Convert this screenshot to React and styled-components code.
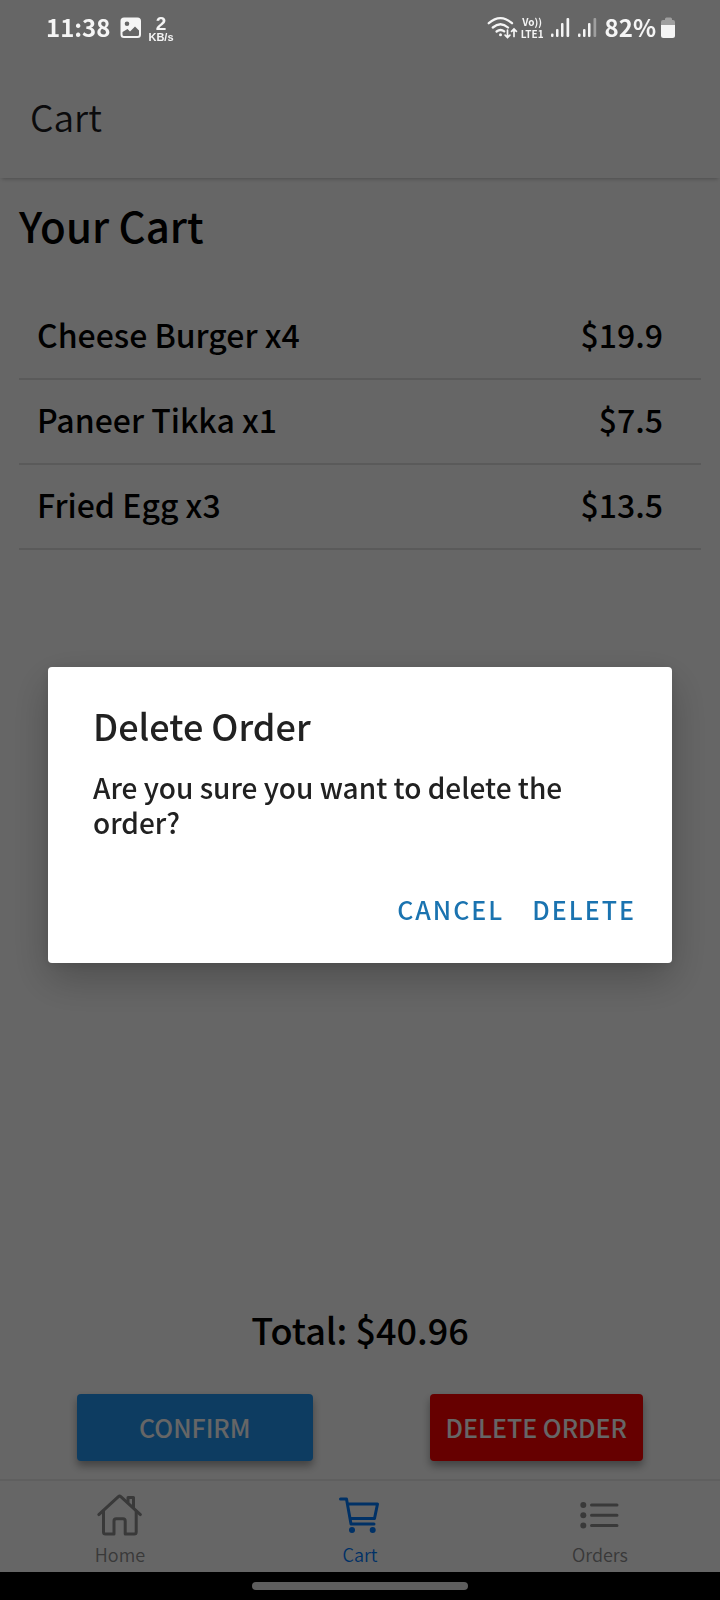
import React from 'react';
import styled, { createGlobalStyle } from 'styled-components';

const GlobalStyle = createGlobalStyle`
  *, *::before, *::after { box-sizing: border-box; }
  body {
    margin: 0;
    background: #fff;
    color: #000;
    font-family: "Noto Sans CJK SC", "Noto Sans", sans-serif;
  }
  h1, h2, p, ul { margin: 0; padding: 0; font-weight: 500; }
  button { font: inherit; border: 0; cursor: pointer; }
`;

const Screen = styled.div`
  min-height: 100vh;
  display: flex;
  flex-direction: column;
`;

/* Status bar: stays bright above the dimmed page */
const StatusBar = styled.div`
  position: relative;
  z-index: 3;
  height: 56px;
  padding: 0 44px 0 46px;
  display: flex;
  align-items: center;
  justify-content: space-between;
  color: #f5f5f5;
`;

const StatusGroup = styled.div`
  display: flex;
  align-items: center;
  gap: ${(p) => p.$gap}px;
`;

const StatusText = styled.span`
  padding-bottom: 2px;
  font-size: 24px;
  line-height: 32px;
  font-weight: 700;
`;

const StatusStack = styled.span`
  display: flex;
  flex-direction: column;
  align-items: center;
  font-family: "Liberation Sans", sans-serif;
  font-weight: 700;
  font-size: ${(p) => p.$size}px;
  line-height: ${(p) => p.$line}px;
`;

const StatusSmall = styled.span`
  font-size: 11px;
  line-height: 10px;
`;

const Header = styled.header`
  height: 122px;
  padding: 0 30px 2px;
  display: flex;
  align-items: center;
  box-shadow: 0 3px 4px -2px rgba(0, 0, 0, 0.25);
`;

const HeaderTitle = styled.h1`
  font-size: 37px;
  line-height: 40px;
  font-weight: 350;
  color: #1c1c1e;
`;

const Main = styled.main`
  flex: 1;
  display: flex;
  flex-direction: column;
  padding: 23px 19px 18px;
`;

const Heading = styled.h2`
  font-size: 42px;
  line-height: 48px;
  margin-bottom: 46px;
`;

const CartList = styled.ul`
  flex: 1;
  list-style: none;
`;

const CartRow = styled.li`
  height: 85px;
  padding: 0 38px 6px 18px;
  display: flex;
  align-items: center;
  justify-content: space-between;
  border-bottom: 2px solid #e0e0e0;
  font-size: 32px;
  line-height: 40px;
  font-weight: 500;
`;

const Total = styled.p`
  text-align: center;
  font-size: 36px;
  line-height: 48px;
  margin-bottom: 41px;
`;

const Actions = styled.div`
  display: flex;
  justify-content: space-between;
  padding: 0 58px;
`;

const ActionButton = styled.button`
  height: 67px;
  padding: 0 ${(p) => p.$pad}px 2px;
  border-radius: 4px;
  background: ${(p) => p.$color};
  color: #fff;
  font-size: 25px;
  line-height: 32px;
  font-weight: 500;
  box-shadow: 0 5px 8px rgba(0, 0, 0, 0.36);
`;

const TabBar = styled.nav`
  height: 93px;
  display: grid;
  grid-template-columns: repeat(3, 1fr);
  border-top: 2px solid #eeeeee;
`;

const Tab = styled.a`
  display: flex;
  flex-direction: column;
  align-items: center;
  gap: 4px;
  padding-top: 11px;
  color: ${(p) => (p.$active ? '#007aff' : '#8e8e8f')};
  font-size: 18px;
  line-height: 28px;
  font-weight: 350;
  text-decoration: none;

  svg { display: block; }
`;

const GestureBar = styled.div`
  position: relative;
  z-index: 3;
  height: 28px;
  padding-top: 10px;
  background: #000;
`;

const GesturePill = styled.div`
  width: 30%;
  height: 8px;
  margin: 0 auto;
  border-radius: 4px;
  background: #5e5e5e;
`;

const Backdrop = styled.div`
  position: fixed;
  inset: 0;
  z-index: 2;
  display: flex;
  align-items: center;
  padding: 58px 48px 28px;
  background: rgba(0, 0, 0, 0.6);
`;

const Dialog = styled.div`
  width: 100%;
  padding: 34px 24px 26px 45px;
  border-radius: 4px;
  background: #fff;
  color: #212121;
  box-shadow: 0 16px 40px rgba(0, 0, 0, 0.24), 0 2px 12px rgba(0, 0, 0, 0.1);
`;

const DialogTitle = styled.h2`
  font-size: 36px;
  line-height: 48px;
`;

const DialogText = styled.p`
  margin-top: 21px;
  padding-right: 22px;
  font-size: 28px;
  line-height: 35px;
`;

const DialogActions = styled.div`
  display: flex;
  justify-content: flex-end;
  margin-top: 41px;
`;

const DialogButton = styled.button`
  height: 56px;
  padding: 0 12px 0 16px;
  background: none;
  color: #1a73b0;
  font-size: 25px;
  line-height: 32px;
  font-weight: 500;
  letter-spacing: 2px;
`;

const ImageIcon = () => (
  <svg width="22" height="22" viewBox="0 0 22 22" aria-hidden="true">
    <path fillRule="evenodd" fill="currentColor" d="M4 .5h13.500a3.500 3.500 0 0 1 3.500 3.500v13.500a3.500 3.500 0 0 1-3.500 3.500H4A3.500 3.500 0 0 1 .5 17.500V4A3.500 3.500 0 0 1 4 .5zM7 4.500a2.300 2.300 0 1 0 0 4.600 2.300 2.300 0 0 0 0-4.600zM2.500 15v2.500q0 1.500 1.500 1.500h13.500q1.500 0 1.500-1.500v-4l-4-4-5 5-2.500-2.500z" />
  </svg>
);

const WifiIcon = () => (
  <svg width="32" height="24" viewBox="0 0 32 24" fill="none" stroke="currentColor" strokeWidth="2.300" strokeLinecap="round" aria-hidden="true">
    <path d="M1.800 7.200Q13.500-3 25 7.200M5.800 11.500q7.700-6.400 15.200 0M9.600 15.500q3.900-3 7.600-.2" />
    <circle cx="13.500" cy="18.800" r="1.500" fill="currentColor" stroke="none" />
    <path strokeWidth="1.700" d="M20.500 14v7.500m-2.400-2.400 2.400 2.400 2.400-2.400M27 20.500V13m-2.400 2.400L27 13l2.400 2.400" />
  </svg>
);

const VoLte = styled(StatusStack)`
  font-family: "Noto Sans CJK SC", sans-serif;
`;

const SignalIcon = ({ weak }) => (
  <svg width="20" height="20" viewBox="0 0 20 20" fill="currentColor" aria-hidden="true">
    <rect x="0" y="15.500" width="2.500" height="3.500" rx="1" />
    <rect x="5" y="11" width="2.500" height="8" rx="1" />
    <rect x="10" y="5" width="2.500" height="14" rx="1" />
    <rect x="15.500" y="0" width="2.700" height="19" rx="1" opacity={weak ? 0.4 : 1} />
  </svg>
);

const BatteryIcon = () => (
  <svg width="15" height="22" viewBox="0 0 15 22" fill="currentColor" aria-hidden="true">
    <path opacity=".4" d="M0 8V5q0-2 2-2h2V2q0-1.500 1.500-1.500h4Q11 .5 11 2v1h1q2 0 2 2v3z" />
    <path d="M0 8h14v10.500q0 2.500-2.500 2.500h-9Q0 21 0 18.500z" />
  </svg>
);

const HomeIcon = () => (
  <svg width="48" height="44" viewBox="0 0 48 44" fill="none" stroke="currentColor" strokeWidth="3" strokeLinecap="round" strokeLinejoin="round" aria-hidden="true">
    <path d="M2.800 22.600 22.400 4.600q1.200-1 2.400 0l19.600 18" />
    <path d="M7.500 19v21q0 2 2 2h8.500V29q0-2.200 2.200-2.200h6.800q2.200 0 2.200 2.200v13h9q2 0 2-2V19" />
    <path d="M32 10V5.500h5.500v10" />
  </svg>
);

const CartIcon = () => (
  <svg width="48" height="44" viewBox="0 0 48 44" fill="none" stroke="currentColor" strokeWidth="3" strokeLinecap="round" strokeLinejoin="round" aria-hidden="true">
    <path d="M4.500 7h6l4.500 25h23M11.500 12H41.500l-3 14.500H14.200" />
    <circle cx="16" cy="38" r="3" fill="currentColor" stroke="none" />
    <circle cx="36.700" cy="38" r="3" fill="currentColor" stroke="none" />
  </svg>
);

const ListIcon = () => (
  <svg width="48" height="44" viewBox="0 0 48 44" fill="currentColor" stroke="currentColor" strokeWidth="3" strokeLinecap="round" aria-hidden="true">
    <path d="M15.500 13h25.500M15.500 23.300h25.500M15.500 33.600h25.500" />
    <g stroke="none">
      <circle cx="7.300" cy="13" r="3" />
      <circle cx="7.300" cy="23.300" r="3" />
      <circle cx="7.300" cy="33.600" r="3" />
    </g>
  </svg>
);

const items = [
  { name: 'Cheese Burger', count: 4, price: '$19.9' },
  { name: 'Paneer Tikka', count: 1, price: '$7.5' },
  { name: 'Fried Egg', count: 3, price: '$13.5' },
];

const tabs = [
  { label: 'Home', href: '#home', Icon: HomeIcon },
  { label: 'Cart', href: '#cart', Icon: CartIcon, active: true },
  { label: 'Orders', href: '#orders', Icon: ListIcon },
];

export default function App() {
  return (
    <Screen>
      <GlobalStyle />
      <StatusBar>
        <StatusGroup $gap={6}>
          <StatusGroup $gap={10}>
            <StatusText>11:38</StatusText>
            <ImageIcon />
          </StatusGroup>
          <StatusStack $size={19} $line={17}>
            <span>2</span>
            <StatusSmall>KB/s</StatusSmall>
          </StatusStack>
        </StatusGroup>
        <StatusGroup $gap={7}>
          <StatusGroup $gap={2}>
            <WifiIcon />
            <VoLte $size={10} $line={12}>
              <span>Vo))</span>
              <span>LTE1</span>
            </VoLte>
          </StatusGroup>
          <SignalIcon />
          <SignalIcon weak />
          <StatusGroup $gap={5}>
            <StatusText>82%</StatusText>
            <BatteryIcon />
          </StatusGroup>
        </StatusGroup>
      </StatusBar>

      <Header>
        <HeaderTitle>Cart</HeaderTitle>
      </Header>

      <Main>
        <Heading>Your Cart</Heading>
        <CartList>
          {items.map((item) => (
            <CartRow key={item.name}>
              <span>{item.name} x{item.count}</span>
              <span>{item.price}</span>
            </CartRow>
          ))}
        </CartList>
        <Total>Total: $40.96</Total>
        <Actions>
          <ActionButton type="button" $color="#2196f3" $pad={62}>CONFIRM</ActionButton>
          <ActionButton type="button" $color="#ff0000" $pad={16}>DELETE ORDER</ActionButton>
        </Actions>
      </Main>

      <TabBar>
        {tabs.map(({ label, href, Icon, active }) => (
          <Tab key={label} href={href} $active={active} aria-current={active ? 'page' : undefined}>
            <Icon />
            {label}
          </Tab>
        ))}
      </TabBar>
      <GestureBar>
        <GesturePill />
      </GestureBar>

      <Backdrop>
        <Dialog role="alertdialog" aria-modal="true" aria-labelledby="dialog-title" aria-describedby="dialog-text">
          <DialogTitle id="dialog-title">Delete Order</DialogTitle>
          <DialogText id="dialog-text">Are you sure you want to delete the order?</DialogText>
          <DialogActions>
            <DialogButton type="button">CANCEL</DialogButton>
            <DialogButton type="button">DELETE</DialogButton>
          </DialogActions>
        </Dialog>
      </Backdrop>
    </Screen>
  );
}
